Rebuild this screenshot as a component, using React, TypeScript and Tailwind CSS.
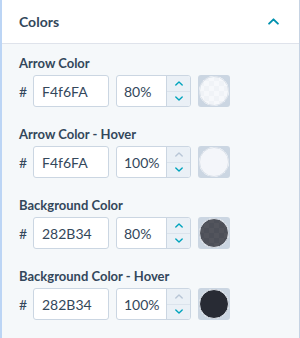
import React from 'react';

type ColorField = {
  label: string;
  hex: string;
  alpha: string;
  overlay: string;
  upDisabled?: boolean;
};

const fields: ColorField[] = [
  { label: 'Arrow Color', hex: 'F4f6FA', alpha: '80%', overlay: 'bg-[#f4f6fa]/80' },
  { label: 'Arrow Color - Hover', hex: 'F4f6FA', alpha: '100%', overlay: 'bg-[#f4f6fa]', upDisabled: true },
  { label: 'Background Color', hex: '282B34', alpha: '80%', overlay: 'bg-[#282b34]/80' },
  { label: 'Background Color - Hover', hex: '282B34', alpha: '100%', overlay: 'bg-[#282b34]', upDisabled: true },
];

const Chevron: React.FC<{ up?: boolean; className?: string; w?: number; h?: number }> = ({ up, className, w = 10, h = 6 }) => (
  <svg width={w} height={h} viewBox="0 0 10 6" className={className} fill="none">
    <polyline
      points={up ? '1,5 5,1 9,5' : '1,1 5,5 9,1'}
      stroke="currentColor"
      strokeWidth="1.7"
      strokeLinecap="round"
      strokeLinejoin="round"
    />
  </svg>
);

const Swatch: React.FC<{ overlay: string }> = ({ overlay }) => (
  <div className="relative w-8 h-8 rounded-[3px] bg-[#cbd6e2]">
    <div className="absolute inset-[1px] rounded-full overflow-hidden bg-[conic-gradient(#dfe3eb_25%,#ffffff_0_50%,#dfe3eb_0_75%,#ffffff_0)] [background-size:10px_10px]">
      <div className={`absolute inset-0 rounded-full border border-[#dbe2ea] ${overlay}`} />
    </div>
  </div>
);

const ColorRow: React.FC<{ field: ColorField }> = ({ field }) => (
  <div className="flex flex-col">
    <div className="text-[13px] leading-5 font-bold text-[#33475b] mb-[2px]">{field.label}</div>
    <div className="flex items-center">
      <span className="w-[14px] text-[14px] text-[#33475b]">#</span>
      <div className="w-[76px] h-8 bg-white border border-[#cbd6e2] rounded-[3px] flex items-center pl-[8px] text-[14px] text-[#33475b]">
        {field.hex}
      </div>
      <div className="ml-[7px] w-[75px] h-8 bg-white border border-[#cbd6e2] rounded-[3px] flex overflow-hidden">
        <div className="flex-1 flex items-center pl-[7px] text-[14px] text-[#33475b]">{field.alpha}</div>
        <div className="w-[24px] flex flex-col bg-[#eaf0f6] border-l border-[#cbd6e2]">
          <div className="flex-1 flex items-center justify-center border-b border-[#dbe3ec]">
            <Chevron up w={8} h={5} className={field.upDisabled ? 'text-[#b8c6d6]' : 'text-[#00a4bd]'} />
          </div>
          <div className="flex-1 flex items-center justify-center">
            <Chevron w={8} h={5} className="text-[#00a4bd]" />
          </div>
        </div>
      </div>
      <div className="ml-[7px]">
        <Swatch overlay={field.overlay} />
      </div>
    </div>
  </div>
);

export default function App() {
  return (
    <div
      className="w-[300px] h-[338px] overflow-hidden bg-[#f5f8fa] border-l-2 border-l-[#bcd5f5] border-r border-r-[#c6d3e3] flex flex-col"
      style={{ fontFamily: 'Lato, "Open Sans", sans-serif' }}
    >
      <div className="h-[44px] shrink-0 bg-white border-b border-[#dfe3eb] flex items-center justify-between pl-[17px] pr-[20px]">
        <span className="text-[14px] font-bold text-[#33475b]">Colors</span>
        <Chevron up w={11} h={7} className="text-[#0091ae]" />
      </div>
      <div className="flex flex-col gap-[17px] pt-[9px] pl-[17px]">
        {fields.map((f) => (
          <ColorRow key={f.label} field={f} />
        ))}
      </div>
    </div>
  );
}
